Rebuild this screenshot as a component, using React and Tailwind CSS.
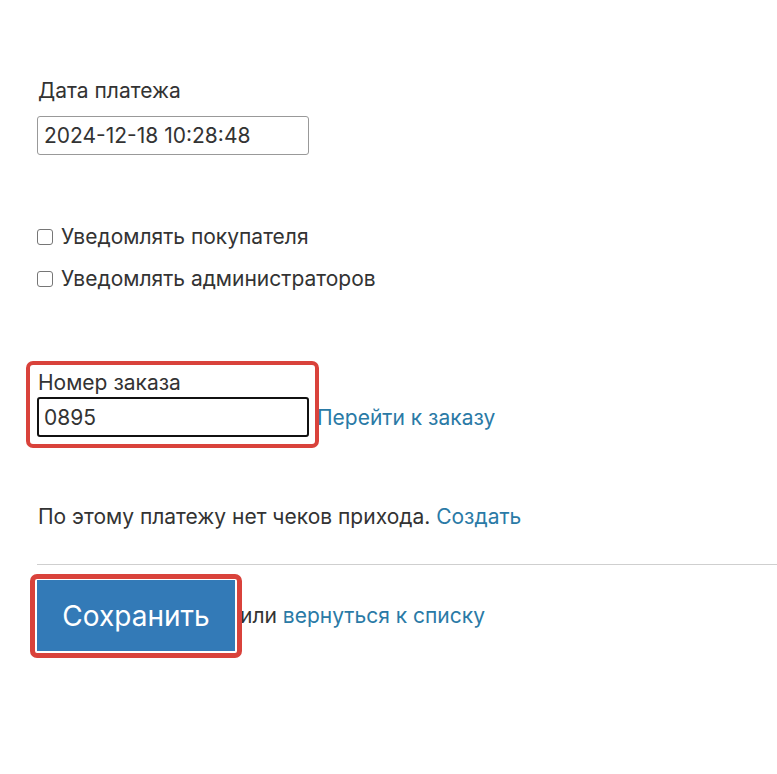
import React from "react";

function Checkbox({ label }) {
  return (
    <label className="flex items-center gap-[8px]">
      <span className="block h-[16px] w-[16px] rounded-[3px] border border-[#767676] bg-white" />
      <span>{label}</span>
    </label>
  );
}

export default function App() {
  return (
    <div className="min-h-screen bg-white pt-[77px] pl-[37px] font-['Inter',sans-serif] text-[21px] leading-[28px] text-[#333]">
      {/* payment date */}
      <div className="pl-px">Дата платежа</div>
      <input
        readOnly
        value="2024-12-18 10:28:48"
        className="mt-[11px] block h-[39px] w-[272px] rounded-[3px] border border-[#999] px-[6px] text-[21px] text-[#333] outline-none"
      />

      <div className="mt-[68px] flex flex-col gap-[14px]">
        <Checkbox label="Уведомлять покупателя" />
        <Checkbox label="Уведомлять администраторов" />
      </div>

      {/* order number */}
      <div className="mt-[76px] flex items-end">
        <div className="relative w-[272px]">
          <div className="pl-px">Номер заказа</div>
          <input
            readOnly
            value="0895"
            className="block h-[40px] w-[272px] rounded-[3px] border-2 border-[#111] px-[5px] text-[21px] text-[#333] outline-none"
          />
          <div className="pointer-events-none absolute -top-[8px] -right-[10px] -bottom-[11px] -left-[11px] rounded-[7px] border-[4px] border-[#d9423b]" />
        </div>
        <a href="#" className="ml-[8px] mb-[5px] text-[#2a7aa6]">
          Перейти к заказу
        </a>
      </div>

      <div className="mt-[66px] pl-px">
        По этому платежу нет чеков прихода.{" "}
        <a href="#" className="text-[#2a7aa6]">
          Создать
        </a>
      </div>

      <div className="mt-[33px] h-px bg-[#cfcfcf]" />

      <div className="mt-[15px] flex items-center gap-[5px]">
        <div className="relative">
          <button className="block h-[71px] w-[198px] bg-[#337ab7] text-[28px] text-white">
            Сохранить
          </button>
          <div className="pointer-events-none absolute -top-[6px] -right-[7px] -bottom-[7px] -left-[7px] rounded-[7px] border-[5px] border-[#d9423b]" />
        </div>
        <span>
          или{" "}
          <a href="#" className="text-[#2a7aa6]">
            вернуться к списку
          </a>
        </span>
      </div>
    </div>
  );
}
